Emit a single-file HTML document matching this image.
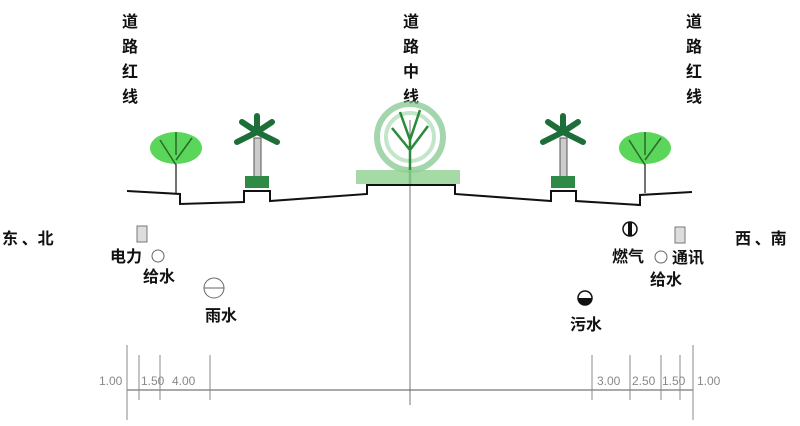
<!DOCTYPE html><html><head><meta charset="utf-8"><style>
body{margin:0;width:800px;height:426px;background:#fff;overflow:hidden}
svg{display:block}
text{font-family:"Liberation Sans","Noto Sans CJK SC",sans-serif}
.cj{font-family:"Noto Sans CJK SC",sans-serif;font-size:16px;fill:#111;font-weight:bold}
.d{font-size:12px;fill:#888}
</style></head><body>
<svg width="800" height="426" viewBox="0 0 800 426">
<g class="cj" text-anchor="middle">
<text x="130" y="27">道</text><text x="130" y="52">路</text><text x="130" y="77">红</text><text x="130" y="102">线</text>
<text x="411" y="27">道</text><text x="411" y="52">路</text><text x="411" y="77">中</text><text x="411" y="102">线</text>
<text x="694" y="27">道</text><text x="694" y="52">路</text><text x="694" y="77">红</text><text x="694" y="102">线</text>
</g>
<line x1="410" y1="120" x2="410" y2="405" stroke="#777" stroke-width="1"/>
<polyline fill="none" stroke="#111" stroke-width="2" points="127,191 180,194 180,204 244,202 244,191 270,191 270,201 367,194 367,185 455,185 455,194 551,201 551,191 576,191 576,201 640,205 640,195 692,192"/>
<g>
<line x1="176" y1="155" x2="176" y2="193" stroke="#444" stroke-width="1.5"/>
<ellipse cx="176" cy="148" rx="26" ry="16" fill="#5ad65a"/>
<path d="M176 165 L160 140 M176 160 L192 138 M176 155 L176 132" stroke="#2a6a2a" stroke-width="1.5" fill="none"/>
<line x1="645" y1="155" x2="645" y2="193" stroke="#444" stroke-width="1.5"/>
<ellipse cx="645" cy="148" rx="26" ry="16" fill="#5ad65a"/>
<path d="M645 165 L629 140 M645 160 L661 138 M645 155 L645 132" stroke="#2a6a2a" stroke-width="1.5" fill="none"/>
<rect x="254" y="138" width="7" height="40" fill="#ccc" stroke="#555"/>
<path d="M257 132 L237 142 M257 132 L277 142 M257 132 L242 122 M257 132 L272 122 M257 132 L257 116" stroke="#1e6e3a" stroke-width="6" stroke-linecap="round" fill="none"/>
<rect x="245" y="176" width="24" height="12" fill="#2f8a45"/>
<rect x="560" y="138" width="7" height="40" fill="#ccc" stroke="#555"/>
<path d="M563 132 L543 142 M563 132 L583 142 M563 132 L548 122 M563 132 L578 122 M563 132 L563 116" stroke="#1e6e3a" stroke-width="6" stroke-linecap="round" fill="none"/>
<rect x="551" y="176" width="24" height="12" fill="#2f8a45"/>
<circle cx="410" cy="137" r="33" fill="none" stroke="#7cc48a" stroke-width="6" opacity=".7"/>
<circle cx="410" cy="137" r="24" fill="none" stroke="#9bd3a5" stroke-width="4" opacity=".6"/>
<path d="M410 184 L410 140 M410 150 L392 128 M410 150 L428 126 M410 140 L400 112 M410 140 L420 110" stroke="#2a8a3a" stroke-width="2.5" fill="none"/>
<rect x="356" y="170" width="104" height="14" fill="#8fcf8f" opacity=".8"/>
</g>
<text x="2" y="244" class="cj">东 、北</text>
<text x="735" y="244" class="cj">西 、南</text>
<rect x="137" y="226" width="10" height="16" fill="#ddd" stroke="#777"/>
<text x="110" y="262" class="cj">电力</text>
<circle cx="158" cy="256" r="6" fill="none" stroke="#666"/>
<text x="143" y="282" class="cj">给水</text>
<circle cx="214" cy="288" r="10" fill="none" stroke="#666"/><line x1="204" y1="288" x2="224" y2="288" stroke="#666"/>
<text x="205" y="321" class="cj">雨水</text>
<circle cx="630" cy="229" r="7" fill="#fff" stroke="#111" stroke-width="1.5"/><rect x="628" y="222" width="4" height="14" fill="#111"/>
<text x="612" y="262" class="cj">燃气</text>
<circle cx="661" cy="257" r="6" fill="none" stroke="#666"/>
<rect x="675" y="227" width="10" height="16" fill="#ddd" stroke="#777"/>
<text x="672" y="263" class="cj">通讯</text>
<text x="650" y="285" class="cj">给水</text>
<circle cx="585" cy="298" r="7" fill="#fff" stroke="#111" stroke-width="1.5"/><path d="M578 298 A7 7 0 0 0 592 298Z" fill="#111"/>
<text x="570" y="330" class="cj">污水</text>
<g stroke="#888" stroke-width="1">
<line x1="127" y1="390" x2="693" y2="390" stroke="#555"/>
<line x1="127" y1="345" x2="127" y2="420"/>
<line x1="139" y1="355" x2="139" y2="400"/>
<line x1="160" y1="355" x2="160" y2="400"/>
<line x1="210" y1="355" x2="210" y2="400"/>
<line x1="592" y1="355" x2="592" y2="400"/>
<line x1="630" y1="355" x2="630" y2="400"/>
<line x1="661" y1="355" x2="661" y2="400"/>
<line x1="680" y1="355" x2="680" y2="400"/>
<line x1="693" y1="345" x2="693" y2="420"/>
</g>
<g class="d">
<text x="99" y="385">1.00</text><text x="141" y="385">1.50</text><text x="172" y="385">4.00</text>
<text x="597" y="385">3.00</text><text x="632" y="385">2.50</text><text x="662" y="385">1.50</text><text x="697" y="385">1.00</text>
</g>
</svg>
</body></html>
